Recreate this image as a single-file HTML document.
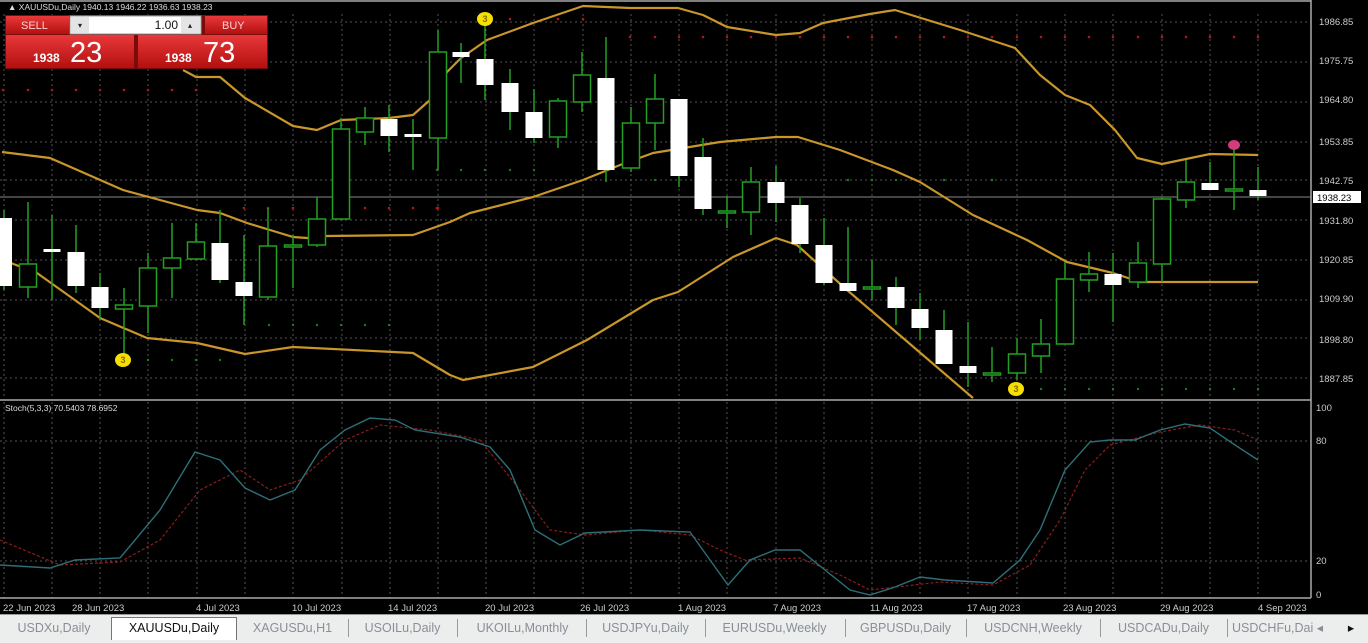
<!DOCTYPE html>
<html><head><meta charset="utf-8"><style>
html,body{margin:0;padding:0;background:#000;width:1368px;height:642px;overflow:hidden;font-family:"Liberation Sans",sans-serif}
svg{position:absolute;left:0;top:0}
.tabs{position:absolute;left:0;top:614px;width:1368px;height:28px;background:#eceded;border-top:1px solid #999}
.tab{position:absolute;top:3px;height:20px;line-height:20px;font-size:12.5px;color:#8a8f96;text-align:center}
.tab.act{background:#fff;color:#111;border:1px solid #777;border-bottom:none;top:2px;height:22px}
.sep{position:absolute;top:4px;width:1px;height:18px;background:#999}
.panel{position:absolute;left:5px;top:15px;width:263px;height:54px;background:#8a0d0d}
</style></head><body>
<svg width="1368" height="614" viewBox="0 0 1368 614" font-family="Liberation Sans, sans-serif">
<rect width="1368" height="614" fill="#000"/>
<!-- grid -->
<g stroke="#555" stroke-width="1" stroke-dasharray="2,3">
<path d="M4 14V400M52 14V400M100 14V400M148 14V400M197 14V400M245 14V400M293 14V400M342 14V400M390 14V400M438 14V400M486 14V400M534 14V400M583 14V400M631 14V400M679 14V400M727 14V400M776 14V400M824 14V400M872 14V400M920 14V400M968 14V400M1017 14V400M1065 14V400M1113 14V400M1162 14V400M1210 14V400M1258 14V400"/>
<path d="M4 402V598M52 402V598M100 402V598M148 402V598M197 402V598M245 402V598M293 402V598M342 402V598M390 402V598M438 402V598M486 402V598M534 402V598M583 402V598M631 402V598M679 402V598M727 402V598M776 402V598M824 402V598M872 402V598M920 402V598M968 402V598M1017 402V598M1065 402V598M1113 402V598M1162 402V598M1210 402V598M1258 402V598"/>
<path d="M0 22H1311M0 62H1311M0 102H1311M0 142H1311M0 180H1311M0 220H1311M0 260H1311M0 300H1311M0 338H1311M0 378H1311M0 441H1311M0 561H1311"/>
</g>
<line x1="0" y1="197" x2="1311" y2="197" stroke="#888" stroke-width="1"/>
<!-- frame -->
<g stroke="#aaa" stroke-width="1.5" fill="none">
<line x1="1311" y1="0" x2="1311" y2="598"/>
<line x1="0" y1="400" x2="1311" y2="400"/>
<line x1="0" y1="598" x2="1311" y2="598"/>
<line x1="0" y1="1" x2="1311" y2="1"/>
</g>
<!-- dots -->
<g fill="#b01818">
<circle cx="3" cy="90" r="1.3"/><circle cx="28" cy="90" r="1.3"/><circle cx="52" cy="90" r="1.3"/><circle cx="76" cy="90" r="1.3"/><circle cx="100" cy="90" r="1.3"/><circle cx="124" cy="90" r="1.3"/><circle cx="148" cy="90" r="1.3"/><circle cx="172" cy="90" r="1.3"/><circle cx="196" cy="90" r="1.3"/>
<circle cx="244" cy="208" r="1.3"/><circle cx="268" cy="208" r="1.3"/><circle cx="293" cy="208" r="1.3"/><circle cx="365" cy="208" r="1.3"/><circle cx="389" cy="208" r="1.3"/><circle cx="413" cy="208" r="1.3"/><circle cx="437" cy="208" r="1.3"/>
<circle cx="437" cy="208" r="1.3"/><circle cx="438" cy="208" r="1.3"/>
<circle cx="510" cy="19" r="1.3"/><circle cx="558" cy="19" r="1.3"/><circle cx="583" cy="19" r="1.3"/>
<circle cx="630" cy="37" r="1.3"/><circle cx="655" cy="37" r="1.3"/><circle cx="679" cy="37" r="1.3"/><circle cx="703" cy="37" r="1.3"/><circle cx="727" cy="37" r="1.3"/><circle cx="751" cy="37" r="1.3"/><circle cx="776" cy="37" r="1.3"/><circle cx="800" cy="37" r="1.3"/><circle cx="824" cy="37" r="1.3"/><circle cx="848" cy="37" r="1.3"/><circle cx="872" cy="37" r="1.3"/><circle cx="896" cy="37" r="1.3"/><circle cx="920" cy="37" r="1.3"/><circle cx="944" cy="37" r="1.3"/><circle cx="968" cy="37" r="1.3"/><circle cx="992" cy="37" r="1.3"/><circle cx="1017" cy="37" r="1.3"/><circle cx="1041" cy="37" r="1.3"/><circle cx="1065" cy="37" r="1.3"/><circle cx="1089" cy="37" r="1.3"/><circle cx="1113" cy="37" r="1.3"/><circle cx="1138" cy="37" r="1.3"/><circle cx="1162" cy="37" r="1.3"/><circle cx="1186" cy="37" r="1.3"/><circle cx="1210" cy="37" r="1.3"/><circle cx="1234" cy="37" r="1.3"/><circle cx="1258" cy="37" r="1.3"/>
</g>
<g fill="#1d7a1d">
<circle cx="269" cy="325" r="1.2"/><circle cx="293" cy="325" r="1.2"/><circle cx="317" cy="325" r="1.2"/><circle cx="341" cy="325" r="1.2"/><circle cx="365" cy="325" r="1.2"/><circle cx="389" cy="325" r="1.2"/>
<circle cx="148" cy="360" r="1.2"/><circle cx="172" cy="360" r="1.2"/><circle cx="196" cy="360" r="1.2"/><circle cx="220" cy="360" r="1.2"/>
<circle cx="437" cy="170" r="1.2"/><circle cx="461" cy="170" r="1.2"/><circle cx="485" cy="170" r="1.2"/><circle cx="510" cy="170" r="1.2"/><circle cx="534" cy="170" r="1.2"/>
<circle cx="655" cy="180" r="1.2"/><circle cx="703" cy="180" r="1.2"/><circle cx="848" cy="180" r="1.2"/><circle cx="872" cy="180" r="1.2"/><circle cx="896" cy="180" r="1.2"/><circle cx="944" cy="180" r="1.2"/><circle cx="992" cy="180" r="1.2"/>
<circle cx="1041" cy="389" r="1.2"/><circle cx="1065" cy="389" r="1.2"/><circle cx="1089" cy="389" r="1.2"/><circle cx="1113" cy="389" r="1.2"/><circle cx="1138" cy="389" r="1.2"/><circle cx="1162" cy="389" r="1.2"/><circle cx="1186" cy="389" r="1.2"/><circle cx="1210" cy="389" r="1.2"/><circle cx="1234" cy="389" r="1.2"/><circle cx="1258" cy="389" r="1.2"/>
</g>
<!-- bollinger -->
<g stroke="#c9962a" stroke-width="2.2" fill="none" stroke-linejoin="round">
<polyline points="183,70 196,77 220,77 245,98 293,126 317,130 341,120 389,118 413,115 430,100 447,72 461,58 487,40 533,23 583,6 630,8 678,8 703,15 727,27 776,35 800,33 823,23 870,14 895,10 960,30 1015,48 1040,75 1065,95 1090,105 1115,130 1137,158 1162,164 1210,154 1258,155"/>
<polyline points="2,152 50,158 123,190 197,210 220,213 247,223 293,237 307,238 327,236 413,235 450,222 470,213 533,197 583,180 620,165 653,153 720,142 776,137 798,137 840,150 893,170 920,182 973,215 1027,240 1067,262 1113,273 1140,282 1258,282"/>
<polyline points="3,260 37,273 100,318 147,338 197,343 245,354 293,347 413,353 450,375 463,380 533,367 587,340 653,300 678,292 733,257 776,238 797,245 847,290 973,398"/>
</g>
<!-- candles -->
<g stroke="#22a022" stroke-width="1.5" fill="none">
<path d="M4 210V290M28 202V298M52 215V300M76 225V293M100 273V320M124 288V357M148 253V333M172 223V298M196 223V260M220 210V283M244 235V325M268 208V300M293 235V288M317 197V247M341 118V220M365 107V145M389 105V152M413 119V170M438 30V170M461 43V83M485 22V100M510 69V130M534 89V143M558 98V148M582 52V112M606 37V182M631 107V172M655 74V150M679 99V187M703 138V215M727 196V228M751 167V235M776 166V222M800 198V253M824 218V285M848 227V291M872 260V300M896 277V325M920 293V340M944 310V364M968 322V387M992 347V382M1017 338V380M1041 319V373M1065 262V344M1089 252V292M1113 253V322M1138 242V288M1162 197V282M1186 160V208M1210 162V190M1234 147V210M1258 167V200"/>
</g>
<g stroke="#22a022" stroke-width="1.5" fill="#000">
<rect x="19.5" y="264" width="17" height="23"/>
<rect x="115.5" y="305" width="17" height="4"/>
<rect x="139.5" y="268" width="17" height="38"/>
<rect x="163.5" y="258" width="17" height="10"/>
<rect x="187.5" y="242" width="17" height="17"/>
<rect x="259.5" y="246" width="17" height="51"/>
<rect x="284.5" y="245" width="17" height="2"/>
<rect x="308.5" y="219" width="17" height="26"/>
<rect x="332.5" y="129" width="17" height="90"/>
<rect x="356.5" y="118" width="17" height="14"/>
<rect x="429.5" y="52" width="17" height="86"/>
<rect x="549.5" y="101" width="17" height="36"/>
<rect x="573.5" y="75" width="17" height="27"/>
<rect x="622.5" y="123" width="17" height="45"/>
<rect x="646.5" y="99" width="17" height="24"/>
<rect x="718.5" y="211" width="17" height="2"/>
<rect x="742.5" y="182" width="17" height="30"/>
<rect x="863.5" y="287" width="17" height="2"/>
<rect x="983.5" y="373" width="17" height="2"/>
<rect x="1008.5" y="354" width="17" height="19"/>
<rect x="1032.5" y="344" width="17" height="12"/>
<rect x="1056.5" y="279" width="17" height="65"/>
<rect x="1080.5" y="274" width="17" height="6"/>
<rect x="1129.5" y="263" width="17" height="19"/>
<rect x="1153.5" y="199" width="17" height="65"/>
<rect x="1177.5" y="182" width="17" height="18"/>
<rect x="1225.5" y="189" width="17" height="2"/>
</g>
<g fill="#fff">
<rect x="0" y="218" width="12" height="68"/>
<rect x="43.5" y="249" width="17" height="3"/>
<rect x="67.5" y="252" width="17" height="34"/>
<rect x="91.5" y="287" width="17" height="21"/>
<rect x="211.5" y="243" width="17" height="37"/>
<rect x="235.5" y="282" width="17" height="14"/>
<rect x="380.5" y="119" width="17" height="17"/>
<rect x="404.5" y="134" width="17" height="3"/>
<rect x="452.5" y="52" width="17" height="5"/>
<rect x="476.5" y="59" width="17" height="26"/>
<rect x="501.5" y="83" width="17" height="29"/>
<rect x="525.5" y="112" width="17" height="26"/>
<rect x="597.5" y="78" width="17" height="92"/>
<rect x="670.5" y="99" width="17" height="77"/>
<rect x="694.5" y="157" width="17" height="52"/>
<rect x="767.5" y="182" width="17" height="21"/>
<rect x="791.5" y="205" width="17" height="39"/>
<rect x="815.5" y="245" width="17" height="38"/>
<rect x="839.5" y="283" width="17" height="8"/>
<rect x="887.5" y="287" width="17" height="21"/>
<rect x="911.5" y="309" width="17" height="19"/>
<rect x="935.5" y="330" width="17" height="34"/>
<rect x="959.5" y="366" width="17" height="7"/>
<rect x="1104.5" y="274" width="17" height="11"/>
<rect x="1201.5" y="183" width="17" height="7"/>
<rect x="1249.5" y="190" width="17" height="6"/>
</g>
<!-- markers -->
<g font-size="9" font-weight="bold" text-anchor="middle" fill="#8a6a00">
<ellipse cx="123" cy="360" rx="8" ry="7" fill="#f5e000"/><text x="123" y="363">3</text>
<ellipse cx="485" cy="19" rx="8" ry="7" fill="#f5e000"/><text x="485" y="22">3</text>
<ellipse cx="1016" cy="389" rx="8" ry="7" fill="#f5e000"/><text x="1016" y="392">3</text>
</g>
<ellipse cx="1234" cy="145" rx="6" ry="5" fill="#d03c7c"/>
<!-- stochastic -->
<polyline fill="none" stroke="#8a1c1c" stroke-width="1.2" stroke-dasharray="3,2" points="0,540 60,565 120,562 160,540 200,490 240,470 270,490 300,480 345,440 380,425 430,430 480,440 520,490 550,530 585,535 640,530 690,535 720,550 745,560 800,558 840,575 870,590 940,582 993,585 1030,565 1060,520 1085,470 1110,445 1160,432 1200,425 1235,430 1258,440"/>
<polyline fill="none" stroke="#2d6f78" stroke-width="1.4" points="0,565 50,568 75,560 120,558 160,510 195,452 220,460 245,488 270,500 295,490 320,450 345,430 370,418 395,420 415,430 460,437 490,447 510,470 535,530 560,545 585,533 640,530 690,532 710,560 728,585 750,560 775,550 800,550 825,570 850,590 870,595 895,587 920,577 945,580 993,583 1020,560 1040,530 1065,470 1090,442 1110,440 1135,440 1160,430 1185,424 1210,428 1235,445 1258,460"/>
<!-- text -->
<g fill="#ddd" font-size="8.5">
<text x="8" y="10">▲ XAUUSDu,Daily  1940.13 1946.22 1936.63 1938.23</text>
<text x="5" y="411">Stoch(5,3,3) 70.5403 78.6952</text>
</g>
<g fill="#ccc" font-size="9.5">
<text x="1319" y="25">1986.85</text><text x="1319" y="64">1975.75</text><text x="1319" y="103">1964.80</text><text x="1319" y="145">1953.85</text><text x="1319" y="184">1942.75</text>
<text x="1319" y="224">1931.80</text><text x="1319" y="263">1920.85</text><text x="1319" y="302">1909.90</text><text x="1319" y="343">1898.80</text><text x="1319" y="382">1887.85</text>
<text x="1316" y="411">100</text><text x="1316" y="444">80</text><text x="1316" y="564">20</text><text x="1316" y="598">0</text>
</g>
<rect x="1313" y="191" width="48" height="12" fill="#fff"/>
<text x="1317" y="201" font-size="9.5" fill="#000">1938.23</text>
<g fill="#ccc" font-size="9.5">
<text x="3" y="611">22 Jun 2023</text><text x="72" y="611">28 Jun 2023</text><text x="196" y="611">4 Jul 2023</text><text x="292" y="611">10 Jul 2023</text><text x="388" y="611">14 Jul 2023</text><text x="485" y="611">20 Jul 2023</text><text x="580" y="611">26 Jul 2023</text><text x="678" y="611">1 Aug 2023</text><text x="773" y="611">7 Aug 2023</text><text x="870" y="611">11 Aug 2023</text><text x="967" y="611">17 Aug 2023</text><text x="1063" y="611">23 Aug 2023</text><text x="1160" y="611">29 Aug 2023</text><text x="1258" y="611">4 Sep 2023</text>
</g>
<!-- trade panel -->
<defs><linearGradient id="rg" x1="0" y1="0" x2="0" y2="1"><stop offset="0" stop-color="#e8383a"/><stop offset="1" stop-color="#b3100f"/></linearGradient></defs>
<rect x="5" y="15" width="263" height="54" fill="#7a0b0b"/>
<rect x="6" y="16" width="63" height="18" fill="url(#rg)"/>
<rect x="205" y="16" width="62" height="18" fill="url(#rg)"/>
<rect x="6" y="35" width="128" height="33" fill="url(#rg)"/>
<rect x="138" y="35" width="129" height="33" fill="url(#rg)"/>
<rect x="70" y="16" width="131" height="18" fill="#fff" stroke="#999"/>
<rect x="71" y="17" width="18" height="16" fill="#e4e4e4"/>
<rect x="181" y="17" width="19" height="16" fill="#e4e4e4"/>
<text x="80" y="28" font-size="8" fill="#222" text-anchor="middle">▾</text>
<text x="190" y="28" font-size="8" fill="#222" text-anchor="middle">▴</text>
<text x="178" y="29" font-size="12" fill="#111" text-anchor="end">1.00</text>
<text x="21" y="29" font-size="11" fill="#fbd0d0">SELL</text>
<text x="222" y="29" font-size="11" fill="#fbd0d0">BUY</text>
<text x="33" y="62" font-size="12" font-weight="bold" fill="#fff">1938</text>
<text x="70" y="62" font-size="29" fill="#fff">23</text>
<text x="165" y="62" font-size="12" font-weight="bold" fill="#fff">1938</text>
<text x="203" y="62" font-size="29" fill="#fff">73</text>
</svg>
<div class="tabs">
<div class="tab" style="left:8px;width:92px">USDXu,Daily</div>
<div class="tab act" style="left:111px;width:124px">XAUUSDu,Daily</div>
<div class="tab" style="left:240px;width:105px">XAGUSDu,H1</div>
<div class="sep" style="left:348px"></div>
<div class="tab" style="left:350px;width:105px">USOILu,Daily</div>
<div class="sep" style="left:457px"></div>
<div class="tab" style="left:460px;width:125px">UKOILu,Monthly</div>
<div class="sep" style="left:586px"></div>
<div class="tab" style="left:588px;width:115px">USDJPYu,Daily</div>
<div class="sep" style="left:705px"></div>
<div class="tab" style="left:707px;width:135px">EURUSDu,Weekly</div>
<div class="sep" style="left:845px"></div>
<div class="tab" style="left:847px;width:117px">GBPUSDu,Daily</div>
<div class="sep" style="left:966px"></div>
<div class="tab" style="left:968px;width:130px">USDCNH,Weekly</div>
<div class="sep" style="left:1100px"></div>
<div class="tab" style="left:1102px;width:123px">USDCADu,Daily</div>
<div class="sep" style="left:1227px"></div>
<div class="tab" style="left:1232px;width:100px;text-align:left">USDCHFu,Dai ◂</div>
<div class="tab" style="left:1345px;width:12px;color:#111">▸</div>
</div>
</body></html>
